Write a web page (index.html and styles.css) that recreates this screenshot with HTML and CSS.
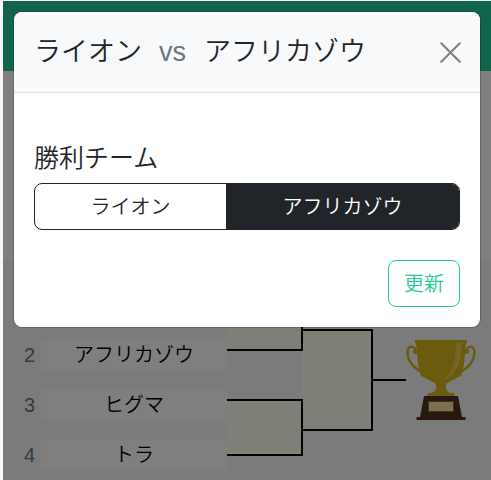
FILE: index.html
```html
<!DOCTYPE html>
<html lang="ja">
<head>
<meta charset="utf-8">
<title>トーナメント</title>
<link rel="stylesheet" href="styles.css">
</head>
<body>
<div class="page">
  <header class="navbar"></header>
  <section class="intro"></section>
  <main class="tournament">
    <ol class="teams">
      <li><span class="seed">1</span><span class="team">ライオン</span></li>
      <li><span class="seed">2</span><span class="team">アフリカゾウ</span></li>
      <li><span class="seed">3</span><span class="team">ヒグマ</span></li>
      <li><span class="seed">4</span><span class="team">トラ</span></li>
    </ol>
    <div class="round first"><div class="match"></div><div class="match"></div></div>
    <div class="round final"><div class="match"></div></div>
    <div class="winner-line"></div>
    <svg class="trophy" viewBox="0 0 70 80">
      <g fill="none" stroke="#d6b71f" stroke-width="2.5">
        <path d="M10 12C10 6 1.5 4 1.5 12C1.5 21 8 29 18 33"/>
        <path d="M60 12C60 6 68.500 4 68.500 12C68.500 21 62 29 52 33"/>
      </g>
      <g fill="#d6b71f">
        <circle cx="9.500" cy="11.500" r="2.500"/><circle cx="60.500" cy="11.500" r="2.500"/>
        <circle cx="17" cy="34" r="2.700"/><circle cx="53" cy="34" r="2.700"/>
        <path d="M9 0H61V3H60C58 15 60 29 53 36C48 41 41 41 40 45C39 50 42 52 44 53C48 52 49 54 49 56H21C21 54 22 52 26 53C28 52 31 50 30 45C29 41 22 41 17 36C10 29 12 15 10 3H9Z"/>
      </g>
      <path fill="#efe09b" opacity=".5" d="M50 3H56C55 21 51 35 38 40C47 31 50 20 50 3Z"/>
      <path fill="#50301f" d="M18 56H52L56 77H59.500V80H10.500V77H14Z"/>
      <path fill="#f4e29d" stroke="#81603a" d="M22.500 61.500H47.500V71.500H22.500Z"/>
    </svg>
  </main>
  <div class="backdrop"></div>
</div>
<div class="modal">
  <div class="modal-header">
    <h1 class="title"><span>ライオン</span><small>vs</small><span>アフリカゾウ</span></h1>
    <svg class="close" viewBox="0 0 20 20"><path d="M1.200 1.200L18.800 18.800M18.800 1.200L1.200 18.800"/></svg>
  </div>
  <div class="modal-body">
    <div class="label">勝利チーム</div>
    <div class="group"><div class="option">ライオン</div><div class="option selected">アフリカゾウ</div></div>
    <button class="update">更新</button>
  </div>
</div>
</body>
</html>
```
FILE: styles.css
```css
* { box-sizing: border-box; }
body {
  margin: 0;
  height: 480px;
  overflow: hidden;
  position: relative;
  background: #f7f7f7;
  color: #212529;
  font: 350 20px/30px "Liberation Sans", "Noto Sans CJK JP", sans-serif;
}
.page {
  position: relative;
  height: 479px;
  margin: 1px 0 0 3px;
  overflow: hidden;
  background: #f7f7f7;
}
.navbar { height: 70px; background: #20c997; }
.intro { height: 189px; background: #fff; }
.tournament { display: flex; padding-top: 30px; }
.teams {
  display: grid;
  gap: 20px;
  width: 224px;
  margin: 0;
  padding: 0;
  list-style: none;
}
.teams li { display: flex; height: 30px; }
.seed { width: 38px; padding-left: 21px; color: #6c757d; }
.team { width: 186px; background: #fff; text-align: center; color: #000; }
.match { border: 2px solid #000; border-left: 0; background: #fffff0; }
.first { position: relative; z-index: 1; width: 76px; padding-top: 4px; }
.first .match { height: 57px; margin-bottom: 48px; }
.first .match + .match { margin-bottom: 0; }
.final { width: 71px; margin-left: -1px; padding-top: 39px; }
.final .match { height: 102px; }
.winner-line { width: 33px; height: 2px; margin-top: 89px; background: #000; }
.trophy { width: 70px; height: 80px; margin-top: 50px; }
.backdrop { position: absolute; z-index: 2; inset: 0; background: rgba(0, 0, 0, .5); }
.modal {
  position: absolute;
  z-index: 3;
  left: 13px;
  top: 11px;
  width: 468px;
  height: 317px;
  border: 1px solid rgba(0, 0, 0, .175);
  border-radius: 9px;
  background: #fff;
  background-clip: padding-box;
  overflow: hidden;
}
.modal-header {
  display: flex;
  align-items: center;
  justify-content: space-between;
  height: 81px;
  padding: 0 19px 0 20px;
  border-bottom: 1px solid #dee2e6;
  background: #f8f9fa;
}
.title { display: flex; margin: 0; font-size: 27px; font-weight: 350; line-height: 40px; white-space: nowrap; }
.title small { margin: 0 18px 0 17px; font-size: 27px; color: #6c757d; }
.close { width: 21px; height: 21px; fill: none; stroke: #808080; stroke-width: 2; stroke-linecap: round; }
.modal-body { display: flex; flex-direction: column; padding: 45px 20px 0; }
.label { height: 45px; font-size: 25px; line-height: 40px; }
.group { display: flex; height: 47px; border: 1px solid #212529; border-radius: 8px; overflow: hidden; }
.option { width: 191px; line-height: 47px; text-align: center; }
.selected { flex: 1; background: #212529; color: #fff; }
.update {
  align-self: flex-end;
  width: 72px;
  height: 47px;
  margin-top: 30px;
  padding: 0;
  border: 1px solid #20c997;
  border-radius: 8px;
  background: #fff;
  color: #20c997;
  font: inherit;
}
```
